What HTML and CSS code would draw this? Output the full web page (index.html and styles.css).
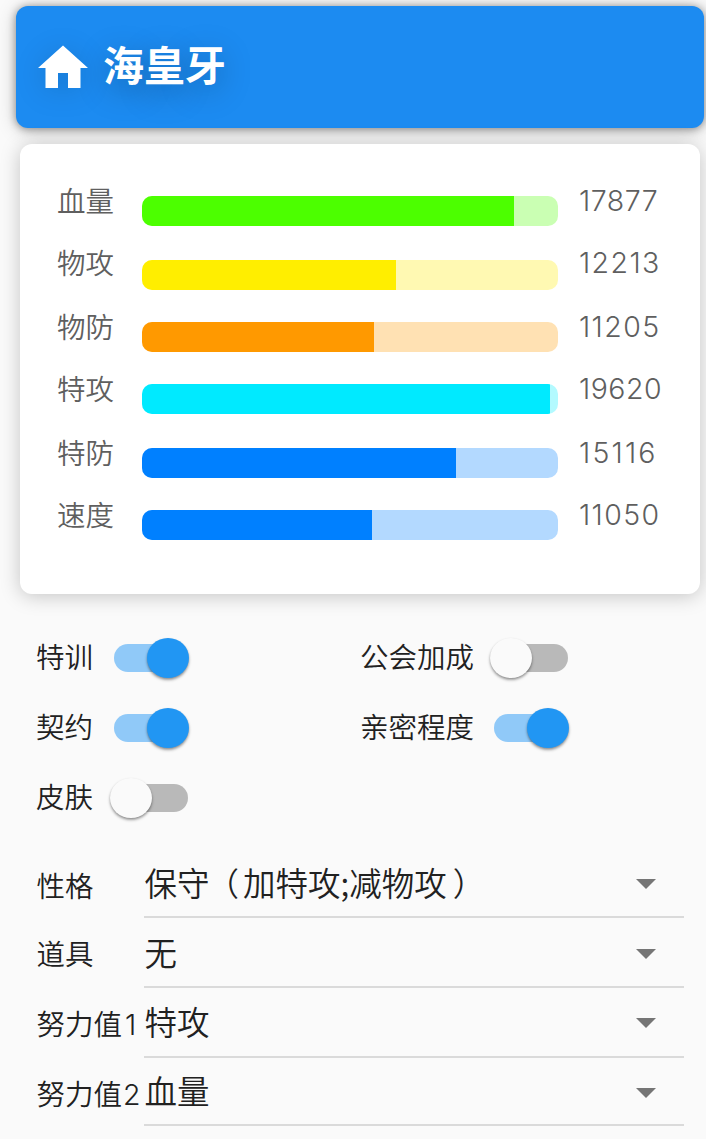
FILE: index.html
```html
<!DOCTYPE html>
<html lang="zh-CN">
<head>
<meta charset="utf-8">
<title>海皇牙</title>
<link rel="stylesheet" href="styles.css">
</head>
<body>
<header class="header">
  <svg class="home" viewBox="0 0 24 24"><path d="M10 20v-6h4v6h5v-8h3L12 3 2 12h3v8z" fill="#fff"/></svg>
  <h1 class="title">海皇牙</h1>
</header>
<section class="card">
  <div class="stat green"><span class="name">血量</span><div class="bar"><div class="fill" style="width:372px"></div></div><span class="num">17877</span></div>
  <div class="stat tall yellow"><span class="name">物攻</span><div class="bar"><div class="fill" style="width:254px"></div></div><span class="num wide">12213</span></div>
  <div class="stat orange"><span class="name">物防</span><div class="bar"><div class="fill" style="width:232px"></div></div><span class="num wide">11205</span></div>
  <div class="stat tall cyan"><span class="name">特攻</span><div class="bar"><div class="fill" style="width:408px"></div></div><span class="num">19620</span></div>
  <div class="stat blue"><span class="name">特防</span><div class="bar"><div class="fill" style="width:314px"></div></div><span class="num wider">15116</span></div>
  <div class="stat blue"><span class="name">速度</span><div class="bar"><div class="fill" style="width:230px"></div></div><span class="num wide">11050</span></div>
</section>
<section class="switches">
  <div class="option"><span class="label">特训</span><span class="switch on"><i class="thumb"></i></span></div>
  <div class="option"><span class="label">公会加成</span><span class="switch"><i class="thumb"></i></span></div>
  <div class="option"><span class="label">契约</span><span class="switch on"><i class="thumb"></i></span></div>
  <div class="option"><span class="label">亲密程度</span><span class="switch on"><i class="thumb"></i></span></div>
  <div class="option"><span class="label">皮肤</span><span class="switch"><i class="thumb"></i></span></div>
</section>
<section class="fields">
  <div class="field first"><span class="label">性格</span><div class="select"><span class="value">保守<span class="open">（</span>加特攻;减物攻<span class="close">）</span></span><i class="arrow"></i></div></div>
  <div class="field"><span class="label">道具</span><div class="select"><span class="value">无</span><i class="arrow"></i></div></div>
  <div class="field third"><span class="label">努力值<span class="digit">1</span></span><div class="select"><span class="value">特攻</span><i class="arrow"></i></div></div>
  <div class="field last"><span class="label">努力值<span class="digit">2</span></span><div class="select"><span class="value">血量</span><i class="arrow"></i></div></div>
</section>
</body>
</html>
```
FILE: styles.css
```css
* { box-sizing: border-box; }
html { overflow: hidden; }
body {
  margin: 0;
  padding: 6px 0 0;
  height: 1139px;
  overflow: hidden;
  background: #fafafa;
  color: #212121;
  font-family: "Noto Sans CJK SC", sans-serif;
  font-weight: 350;
}
.header {
  display: flex;
  align-items: center;
  width: 688px;
  height: 122px;
  margin-left: 16px;
  padding-left: 17px;
  border-radius: 12px;
  background: #1c8bf1;
  box-shadow: 0 1px 9px rgba(0,0,0,.4), 0 2px 20px rgba(0,0,0,.2);
}
.home {
  width: 60px;
  height: 60px;
  margin-top: 1px;
  filter: drop-shadow(0 4px 14px rgba(0,0,0,.14));
}
.title {
  margin: 0 0 9px 10px;
  font-size: 41px;
  line-height: 60px;
  font-weight: 700;
  color: #fff;
  text-shadow: 0 8px 32px rgba(0,0,0,.28);
}
.card {
  position: relative;
  width: 680px;
  height: 450px;
  margin: 16px 0 0 20px;
  padding: 36px 0 0 37px;
  border-radius: 12px;
  background: #fff;
  box-shadow: 0 2px 20px rgba(0,0,0,.22);
}
.stat {
  display: flex;
  height: 62px;
  font-size: 28.5px;
  line-height: 40px;
  color: #5f5f5f;
}
.stat.tall { height: 64px; }
.name { width: 85px; }
.bar {
  width: 416px;
  height: 30px;
  margin-top: 16px;
  border-radius: 10px;
  overflow: hidden;
}
.yellow .bar { margin-top: 18px; }
.fill { height: 100%; }
.num {
  margin: 1px 0 0 21px;
  font-family: Inter, sans-serif;
  font-size: 28.5px;
  font-weight: 300;
  letter-spacing: .5px;
}
.num.wide { letter-spacing: 1.4px; }
.num.wider { letter-spacing: 2.2px; }
.green .bar { background: #caffb3; }
.green .fill { background: #4cff00; }
.yellow .bar { background: #fff9b2; }
.yellow .fill { background: #ffee00; }
.orange .bar { background: #ffe1b3; }
.orange .fill { background: #ff9900; }
.cyan .bar { background: #b3faff; }
.cyan .fill { background: #00eaff; }
.blue .bar { background: #b3d9ff; }
.blue .fill { background: #0080ff; }
.switches {
  display: grid;
  grid-template-columns: 324px 1fr;
  grid-auto-rows: 70px;
  margin: 29px 0 0 36px;
}
.option { display: flex; align-items: center; }
.option .label { margin-bottom: 5px; }
.label { font-size: 28.5px; line-height: 40px; white-space: nowrap; }
.switch {
  display: flex;
  align-items: center;
  width: 74px;
  height: 28px;
  margin-left: 21px;
  border-radius: 14px;
  background: #b9b9b9;
}
.option:nth-child(even) .switch { margin-left: 20px; }
.switch.on { background: #90c9f8; justify-content: flex-end; }
.thumb {
  flex: none;
  width: 42px;
  height: 40px;
  margin-left: -4px;
  border-radius: 50%;
  background: #fafafa;
  box-shadow: 0 2px 3px rgba(0,0,0,.35), 0 1px 2px rgba(0,0,0,.12);
}
.on .thumb { margin: 0 -1px 0 0; background: #2196f3; }
.fields { margin: 15px 0 0 36px; }
.field { display: flex; height: 70px; }
.field .label { width: 108px; margin-top: 15px; padding-left: .5px; }
.field.first .label { margin-top: 17px; }
.select {
  display: flex;
  justify-content: space-between;
  width: 540px;
  height: 70px;
  padding: 10px 28px 0 .5px;
  border-bottom: 2px solid #dadada;
}
.third .select { padding-top: 9px; }
.last .select { height: 68px; padding-top: 8px; }
.value { font-size: 32.5px; line-height: 48px; }
.open { display: inline-block; margin: 0 4px 0 -3px; }
.close { display: inline-block; margin-left: 6px; }
.digit { font-family: Inter, sans-serif; font-weight: 300; margin-left: 1px; }
.third .digit { margin-left: 3px; }
.arrow {
  width: 20px;
  height: 10px;
  margin-top: 21px;
  background: #757575;
  clip-path: polygon(0 0, 100% 0, 50% 100%);
}
.last .arrow { margin-top: 22px; }
```
